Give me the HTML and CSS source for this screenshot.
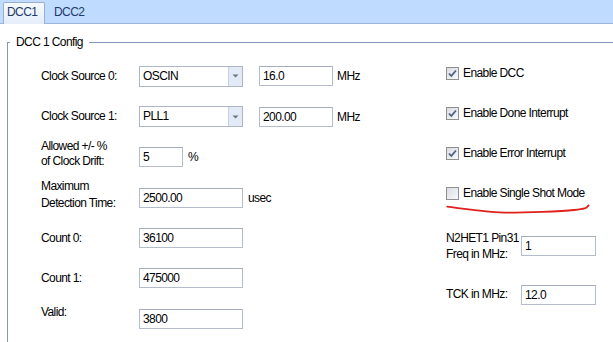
FILE: index.html
```html
<!DOCTYPE html>
<html>
<head>
<meta charset="utf-8">
<link rel="stylesheet" href="styles.css">
</head>
<body>
<div class="tabs">
  <div class="tab active">DCC1</div>
  <div class="tab second">DCC2</div>
</div>
<fieldset class="group">
  <legend>DCC 1 Config</legend>
  <div class="content">
    <div class="left">
      <span class="lbl">Clock Source 0:</span>
      <div class="field">
        <div class="combo"><span class="val">OSCIN</span><span class="arrow"><svg width="7" height="4" viewBox="0 0 7 4"><path d="M0.5 0.5 L6.5 0.5 L3.5 3.5 Z" fill="#6b7380"/></svg></span></div>
        <div class="input w74 ml16">16.0</div><span class="unit u4">MHz</span>
      </div>

      <span class="lbl">Clock Source 1:</span>
      <div class="field">
        <div class="combo"><span class="val">PLL1</span><span class="arrow"><svg width="7" height="4" viewBox="0 0 7 4"><path d="M0.5 0.5 L6.5 0.5 L3.5 3.5 Z" fill="#6b7380"/></svg></span></div>
        <div class="input w74 ml16">200.00</div><span class="unit u4">MHz</span>
      </div>

      <span class="lbl two15">Allowed +/- %<br>of Clock Drift:</span>
      <div class="field">
        <div class="input w44">5</div><span class="unit u5">%</span>
      </div>

      <span class="lbl two17">Maximum<br>Detection Time:</span>
      <div class="field">
        <div class="input w104">2500.00</div><span class="unit u5">usec</span>
      </div>

      <span class="lbl">Count 0:</span>
      <div class="field"><div class="input w104">36100</div></div>

      <span class="lbl">Count 1:</span>
      <div class="field"><div class="input w104">475000</div></div>

      <span class="lbl up6">Valid:</span>
      <div class="field"><div class="input w104">3800</div></div>
    </div>

    <div class="right">
      <label class="check">
        <span class="cb"><svg width="11" height="11" viewBox="0 0 11 11"><path d="M2 5.5 L4.3 8 L9 2.5" fill="none" stroke="#4c5f86" stroke-width="1.8"/></svg></span>
        <span>Enable DCC</span>
      </label>
      <label class="check">
        <span class="cb"><svg width="11" height="11" viewBox="0 0 11 11"><path d="M2 5.5 L4.3 8 L9 2.5" fill="none" stroke="#4c5f86" stroke-width="1.8"/></svg></span>
        <span>Enable Done Interrupt</span>
      </label>
      <label class="check">
        <span class="cb"><svg width="11" height="11" viewBox="0 0 11 11"><path d="M2 5.5 L4.3 8 L9 2.5" fill="none" stroke="#4c5f86" stroke-width="1.8"/></svg></span>
        <span>Enable Error Interrupt</span>
      </label>
      <label class="check">
        <span class="cb"></span>
        <span>Enable Single Shot Mode</span>
        <svg class="scribble" width="146" height="12" viewBox="0 0 146 12"><path d="M1.3 3.7 C 20 6, 45 9.7, 62 9.7 S 115 8.5, 128 7 S 140 5, 142.5 2.5" fill="none" stroke="#e0201c" stroke-width="1.8" stroke-linecap="round"/></svg>
      </label>

      <span class="lbl rl">N2HET1 Pin31<br>Freq in MHz:</span>
      <div class="input w75">1</div>

      <span class="lbl">TCK in MHz:</span>
      <div class="input w75">12.0</div>
    </div>
  </div>
</fieldset>
</body>
</html>
```

FILE: styles.css
```css
html, body {
  margin: 0;
  padding: 0;
}
body {
  width: 613px;
  height: 342px;
  overflow: hidden;
  background: #ffffff;
  font-family: "Liberation Sans", Arial, sans-serif;
  font-size: 12px;
  letter-spacing: -0.6px;
  color: #000;
}

.tabs {
  height: 23px;
  background: #bfdbff;
  border-bottom: 1px solid #9db5d6;
  display: flex;
  align-items: flex-end;
  padding-left: 3px;
}
.tab {
  height: 21px;
  line-height: 20px;
  color: #1e3a66;
  padding: 0 4px;
}
.tab.active {
  box-sizing: border-box;
  width: 42px;
  height: 22px;
  margin-bottom: -1px;
  padding-left: 3px;
  line-height: 19px;
  border: 1px solid #9aafcc;
  border-bottom: none;
  border-radius: 2px 2px 0 0;
  background: linear-gradient(#f6f9fe, #e4eef9);
}
.tab.second {
  padding-left: 9px;
}

.group {
  box-sizing: border-box;
  margin: 12px 0 0 7px;
  padding: 0;
  border: 1px solid #8798bb;
  border-right: none;
  border-bottom: none;
  min-width: 0;
  height: 306px;
  overflow: hidden;
}
.group legend {
  margin-left: 2px;
  padding: 0 6px;
  height: 13px;
  line-height: 13px;
}

.content {
  display: flex;
  padding-left: 33px;
}

.left {
  width: 405px;
  padding-top: 7px;
  display: grid;
  grid-template-columns: 98px auto;
  grid-template-rows: 40px 41px 40px 41px 40px 40px 41px;
  align-items: center;
  align-content: start;
}
.lbl {
  white-space: nowrap;
  line-height: 15px;
}
.lbl.two15 {
  line-height: 15px;
  margin-bottom: 6px;
}
.lbl.two17 {
  line-height: 17px;
  margin-bottom: 6px;
}
.lbl.up6 {
  margin-bottom: 12px;
}
.lbl.rl {
  line-height: 16px;
}

.field {
  display: flex;
  align-items: center;
}

.input {
  box-sizing: border-box;
  height: 20px;
  line-height: 18px;
  padding-left: 3px;
  background: #fff;
  border: 1px solid #b3bdcc;
  border-top-color: #a3adbd;
}
.w44 { width: 44px; }
.w74 { width: 74px; }
.w75 { width: 75px; }
.w104 { width: 104px; }
.ml16 { margin-left: 16px; }
.unit.u4 { margin-left: 4px; }
.unit.u5 { margin-left: 5px; }

.combo {
  box-sizing: border-box;
  width: 104px;
  height: 21px;
  border: 1px solid #adb6c4;
  display: flex;
  background: #fff;
}
.combo .val {
  flex: 1;
  padding-left: 3px;
  line-height: 19px;
}
.combo .arrow {
  width: 13px;
  background: #e1eaf6;
  border-left: 1px solid #c6d3e4;
  display: flex;
  align-items: center;
  justify-content: center;
}

.right {
  padding-top: 4px;
  display: grid;
  grid-template-columns: 75px 75px;
  grid-template-rows: 40px 40px 40px 40px 65px 33px;
  align-items: center;
  align-content: start;
}
.check {
  grid-column: 1 / span 2;
  align-self: stretch;
  display: flex;
  align-items: center;
  gap: 4px;
  position: relative;
  white-space: nowrap;
}
.cb {
  box-sizing: border-box;
  width: 13px;
  height: 13px;
  border: 1px solid #8e8f8f;
  background: linear-gradient(135deg, #d9dce2, #f8f9fb);
  display: flex;
  align-items: center;
  justify-content: center;
}
.scribble {
  position: absolute;
  left: 0;
  top: 30px;
}
```
